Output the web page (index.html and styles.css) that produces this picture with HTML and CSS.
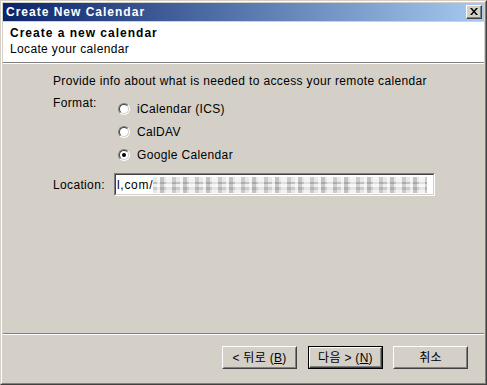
FILE: index.html
```html
<!DOCTYPE html>
<html>
<head>
<meta charset="utf-8">
<link rel="stylesheet" href="styles.css">
</head>
<body>
<div class="window">
  <div class="frame">
    <div class="titlebar">
      <span class="title">Create New Calendar</span>
      <span class="close"><svg width="8" height="7" viewBox="0 0 8 7"><path d="M0 0h2l2 2.5L6 0h2L5 3.5 8 7H6L4 4.5 2 7H0l3-3.5z" fill="#000"/></svg></span>
    </div>
    <div class="header">
      <div class="h-title">Create a new calendar</div>
      <div class="h-sub">Locate your calendar</div>
    </div>
    <div class="body">
      <div class="intro">Provide info about what is needed to access your remote calendar</div>
      <div class="format">
        <div class="label fmt-label">Format:</div>
        <div class="options">
          <div class="opt"><span class="radio"><span class="radio-in"></span></span><span>iCalendar (ICS)</span></div>
          <div class="opt"><span class="radio"><span class="radio-in"></span></span><span>CalDAV</span></div>
          <div class="opt"><span class="radio"><span class="radio-in checked"></span></span><span>Google Calendar</span></div>
        </div>
      </div>
      <div class="location">
        <div class="label loc-label">Location:</div>
        <div class="textbox"><div class="textbox-in"><span class="val">l,com/</span><span class="blur"></span></div></div>
      </div>
    </div>
    <div class="sep"></div>
    <div class="footer">
      <span class="btn b-back"><span class="btn-in">&lt;&nbsp;뒤로&nbsp;(<u>B</u>)</span></span>
      <span class="btn b-next default"><span class="btn-in">다음&nbsp;&gt;&nbsp;(<u>N</u>)</span></span>
      <span class="btn b-cancel"><span class="btn-in">취소</span></span>
    </div>
  </div>
</div>
</body>
</html>
```

FILE: styles.css
```css
html, body {
  margin: 0;
  padding: 0;
  background: #d4d0c8;
}
body {
  font-family: "Liberation Sans", Arial, sans-serif;
  font-size: 12px;
  color: #000;
}
.window {
  width: 487px;
  height: 385px;
  box-sizing: border-box;
  border: 1px solid;
  border-color: #d4d0c8 #404040 #404040 #d4d0c8;
}
.frame {
  height: 100%;
  box-sizing: border-box;
  border: 1px solid;
  border-color: #fff #808080 #808080 #fff;
  padding: 1px;
  display: flex;
  flex-direction: column;
  background: #d4d0c8;
}
.titlebar {
  height: 18px;
  flex: none;
  background: linear-gradient(to right, #0a246a, #a6caf0);
  display: flex;
  align-items: center;
  justify-content: space-between;
  padding-left: 3px;
  padding-right: 2px;
}
.title {
  color: #fff;
  font-weight: bold;
  letter-spacing: 1px;
  font-size: 12px;
}
.close {
  width: 16px;
  height: 14px;
  box-sizing: border-box;
  background: #d4d0c8;
  border: 1px solid;
  border-color: #fff #404040 #404040 #fff;
  box-shadow: inset -1px -1px #808080;
  display: flex;
  align-items: center;
  justify-content: center;
  padding-bottom: 1px;
}
.header {
  margin-top: 1px;
  height: 41px;
  flex: none;
  background: #fff;
  padding: 3px 0 0 7px;
  box-sizing: border-box;
  border-bottom: 1px solid #808080;
  box-shadow: 0 1px 0 #fff;
  margin-bottom: 1px;
  line-height: 16px;
}
.h-title {
  font-weight: bold;
  letter-spacing: 1px;
}
.h-sub {
  letter-spacing: 0.35px;
}
.body {
  flex: 1;
  padding: 10px 0 0 50px;
  letter-spacing: 0.35px;
  line-height: 14px;
}
.intro {
  margin-bottom: 8px;
}
.format {
  display: flex;
}
.label {
  flex: none;
}
.fmt-label {
  width: 65px;
}
.options {
  display: flex;
  flex-direction: column;
  padding-top: 1px;
}
.opt {
  height: 23px;
  display: flex;
  align-items: center;
}
.radio {
  width: 12px;
  height: 12px;
  box-sizing: border-box;
  border-radius: 50%;
  border: 1px solid;
  border-color: #808080 #fff #fff #808080;
  margin-right: 7px;
  display: flex;
}
.radio-in {
  flex: 1;
  border-radius: 50%;
  border: 1px solid;
  border-color: #404040 #d4d0c8 #d4d0c8 #404040;
  background: #fff;
  display: flex;
  align-items: center;
  justify-content: center;
}
.radio-in.checked::after {
  content: "";
  width: 4px;
  height: 4px;
  border-radius: 50%;
  background: #000;
}
.location {
  display: flex;
  align-items: center;
  margin-top: 7px;
}
.loc-label {
  width: 61px;
}
.textbox {
  width: 321px;
  height: 23px;
  box-sizing: border-box;
  border: 1px solid;
  border-color: #808080 #fff #fff #808080;
  display: flex;
}
.textbox-in {
  flex: 1;
  border: 1px solid;
  border-color: #404040 #d4d0c8 #d4d0c8 #404040;
  background: #fff;
  display: flex;
  align-items: center;
  padding-left: 1px;
  overflow: hidden;
  white-space: nowrap;
  letter-spacing: 0.7px;
}
.blur {
  display: inline-block;
  width: 274px;
  height: 16px;
  background:
    repeating-linear-gradient(90deg, rgba(255,255,255,0) 0 4px, rgba(255,255,255,0.6) 4px 7px, rgba(110,110,110,0.3) 7px 11px, rgba(255,255,255,0) 11px 13px, rgba(255,255,255,0.5) 13px 19px, rgba(90,90,90,0.2) 19px 23px),
    repeating-linear-gradient(0deg, #e6e6e6 0 3px, #cbcbcb 3px 6px, #eeeeee 6px 9px, #c0c0c0 9px 11px, #e8e8e8 11px 16px);
}
.sep {
  flex: none;
  border-top: 1px solid #808080;
  border-bottom: 1px solid #fff;
}
.footer {
  flex: none;
  height: 47px;
  box-sizing: border-box;
  padding: 11px 16px 0 0;
  display: flex;
  justify-content: flex-end;
  align-items: flex-start;
}
.btn {
  width: 75px;
  height: 23px;
  box-sizing: border-box;
  border: 1px solid;
  border-color: #fff #404040 #404040 #fff;
  display: flex;
  font-family: "Liberation Sans", "Noto Sans CJK KR", sans-serif;
  font-size: 12px;
}
.btn-in {
  flex: 1;
  border: 1px solid;
  border-color: #d4d0c8 #808080 #808080 #d4d0c8;
  display: flex;
  align-items: center;
  justify-content: center;
  line-height: 14px;
  letter-spacing: 0.3px;
}
.btn.default {
  border: 1px solid #000;
}
.btn.default .btn-in {
  border-color: #fff #404040 #404040 #fff;
  box-shadow: inset -1px -1px #808080;
}
.b-back {
  margin-right: 11px;
}
.b-next {
  margin-right: 10px;
}
```
